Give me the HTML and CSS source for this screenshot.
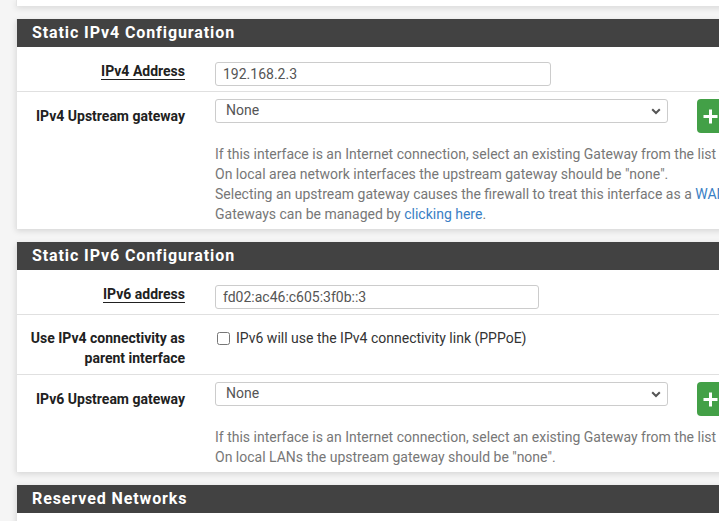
FILE: index.html
```html
<!DOCTYPE html>
<html lang="en">
<head>
<meta charset="UTF-8">
<meta name="viewport" content="width=device-width, initial-scale=1.0">
<title>Interfaces / LAN</title>
<link rel="stylesheet" href="styles.css">
</head>
<body>
<div class="page">
    <!-- tail of the previous panel -->
    <div class="panel panel-prev"></div>

    <div class="panel">
        <div class="panel-heading"><h2 class="panel-title">Static IPv4 Configuration</h2></div>
        <div class="panel-body">
            <div class="form-group first">
                <label class="col-label"><span class="abbr">IPv4 Address</span></label>
                <div class="col-field">
                    <input type="text" class="form-control w-ipv4" value="192.168.2.3">
                </div>
            </div>
            <div class="form-group">
                <label class="col-label">IPv4 Upstream gateway</label>
                <div class="col-field">
                    <div class="select-row">
                        <div class="select-wrap">
                            <select class="form-control"><option>None</option></select>
                            <svg class="chevron" width="10" height="7" viewBox="0 0 10 7"><path d="M1.2 1.2 5 5 8.8 1.2" fill="none" stroke="#555" stroke-width="2"/></svg>
                        </div>
                        <button type="button" class="btn-add">
                            <svg width="15" height="15" viewBox="0 0 15 15"><path d="M7.5 0.5v14M0.5 7.5h14" stroke="#fff" stroke-width="3"/></svg>
                        </button>
                    </div>
                    <p class="help">If this interface is an Internet connection, select an existing Gateway from the list or add a new one using the "Add" button.<br>
                    On local area network interfaces the upstream gateway should be "none".<br>
                    Selecting an upstream gateway causes the firewall to treat this interface as a <a href="#">WAN type interface</a>.<br>
                    Gateways can be managed by <a href="#">clicking here</a>.</p>
                </div>
            </div>
        </div>
    </div>

    <div class="panel">
        <div class="panel-heading"><h2 class="panel-title">Static IPv6 Configuration</h2></div>
        <div class="panel-body">
            <div class="form-group first">
                <label class="col-label"><span class="abbr">IPv6 address</span></label>
                <div class="col-field">
                    <input type="text" class="form-control w-ipv6" value="fd02:ac46:c605:3f0b::3">
                </div>
            </div>
            <div class="form-group check-row">
                <label class="col-label">Use IPv4 connectivity as parent interface</label>
                <div class="col-field">
                    <label class="checkbox"><input type="checkbox"> IPv6 will use the IPv4 connectivity link (PPPoE)</label>
                </div>
            </div>
            <div class="form-group">
                <label class="col-label">IPv6 Upstream gateway</label>
                <div class="col-field">
                    <div class="select-row">
                        <div class="select-wrap">
                            <select class="form-control"><option>None</option></select>
                            <svg class="chevron" width="10" height="7" viewBox="0 0 10 7"><path d="M1.2 1.2 5 5 8.8 1.2" fill="none" stroke="#555" stroke-width="2"/></svg>
                        </div>
                        <button type="button" class="btn-add">
                            <svg width="15" height="15" viewBox="0 0 15 15"><path d="M7.5 0.5v14M0.5 7.5h14" stroke="#fff" stroke-width="3"/></svg>
                        </button>
                    </div>
                    <p class="help">If this interface is an Internet connection, select an existing Gateway from the list or add a new one using the "Add" button.<br>
                    On local LANs the upstream gateway should be "none".</p>
                </div>
            </div>
        </div>
    </div>

    <div class="panel">
        <div class="panel-heading"><h2 class="panel-title">Reserved Networks</h2></div>
        <div class="panel-body">
            <div class="form-group first">
                <label class="col-label">Block private networks and loopback addresses</label>
                <div class="col-field"></div>
            </div>
        </div>
    </div>
</div>
</body>
</html>
```

FILE: styles.css
```css
* {
    margin: 0;
    padding: 0;
    box-sizing: border-box;
}
body {
    background-color: #f5f5f5;
    color: #212121;
    font-family: Roboto, "Liberation Sans", sans-serif;
    font-size: 14px;
    line-height: 20px;
    overflow: hidden;
}
.page {
    width: 1100px;
    padding-left: 16px;
}
.panel {
    background: #fff;
    border-left: 1px solid #e4e4e4;
    box-shadow: 0 2px 6px rgba(0, 0, 0, 0.13);
    margin-bottom: 13px;
}
.panel-prev {
    height: 6px;
}
.panel-heading {
    background-color: #424242;
    height: 28px;
    padding-left: 15px;
}
.panel-title {
    color: #fff;
    font-size: 16px;
    font-weight: bold;
    line-height: 28px;
    letter-spacing: 0.9px;
}
.panel-body {
    padding-bottom: 5px;
}
.form-group {
    display: flex;
    align-items: flex-start;
    border-bottom: 1px solid #e0e0e0;
    padding-bottom: 5px;
}
.form-group:last-child {
    border-bottom: none;
    padding-bottom: 0;
}
.col-label {
    width: 183px;
    flex-shrink: 0;
    padding: 14px 15px 0 10px;
    text-align: right;
    font-weight: bold;
}
.abbr {
    border-bottom: 1px solid #212121;
}
.col-field {
    padding: 7px 15px 0 15px;
}
.form-group.first .col-field {
    padding-top: 15px;
}
.check-row {
    padding-bottom: 6px;
}
.check-row .col-label {
    padding-top: 13px;
}
.check-row .col-field {
    padding-top: 13px;
}
.form-control {
    display: block;
    height: 24px;
    padding: 0 7px;
    font-family: inherit;
    font-size: 14px;
    color: #555;
    background: #fff;
    border: 1px solid #ccc;
    border-radius: 3px;
}
.w-ipv4 {
    width: 336px;
}
.w-ipv6 {
    width: 324px;
}
.select-row {
    display: flex;
    align-items: flex-start;
    gap: 29px;
}
.select-wrap {
    position: relative;
}
.select-wrap select {
    width: 453px;
    appearance: none;
    -webkit-appearance: none;
    padding: 0 10px;
    line-height: 20px;
    padding-bottom: 2px;
}
.chevron {
    position: absolute;
    right: 7px;
    top: 9px;
}
.btn-add {
    width: 34px;
    height: 34px;
    background-color: #43a047;
    border: none;
    border-radius: 4px;
    padding-left: 6px;
    text-align: left;
}
.btn-add svg {
    display: block;
}
.help {
    margin-top: 11px;
    color: #777;
    white-space: nowrap;
}
.help a {
    color: #3a80c5;
    text-decoration: none;
}
.checkbox {
    display: flex;
    align-items: center;
    color: #333;
}
.checkbox input {
    width: 13px;
    height: 13px;
    margin: 0 6px 0 2px;
}
```
